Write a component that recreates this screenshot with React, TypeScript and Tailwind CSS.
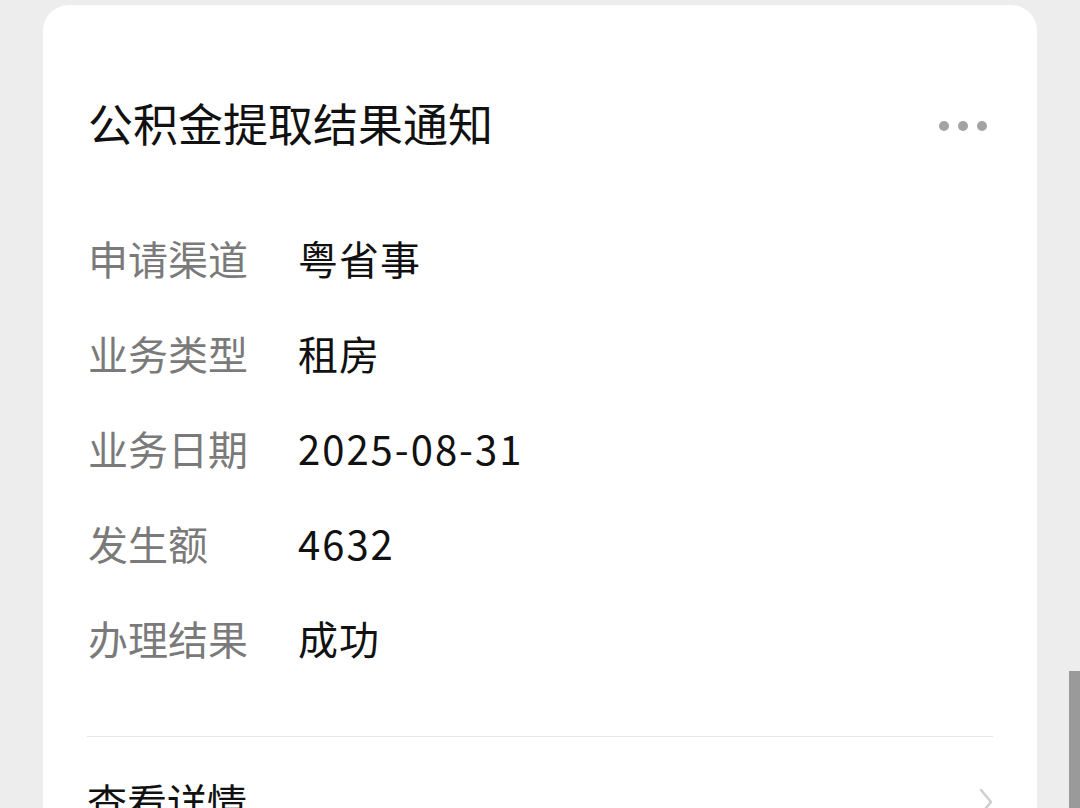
import React from 'react';

const rows = [
  { label: '申请渠道', value: '粤省事' },
  { label: '业务类型', value: '租房' },
  { label: '业务日期', value: '2025-08-31' },
  { label: '发生额', value: '4632' },
  { label: '办理结果', value: '成功' },
];

const font = { fontFamily: '"Noto Sans CJK SC", "Noto Sans", sans-serif' };

export default function App() {
  return (
    <div className="relative h-[808px] w-[1080px] overflow-hidden bg-[#ededed]" style={font}>
      <div className="ml-[43px] mt-[5px] w-[994px] rounded-[26px] bg-white px-[44px] pt-[90px]">
        {/* Header */}
        <div className="flex h-[56px] items-center justify-between pl-[1px]">
          <h1 className="text-[45px] leading-[56px] font-normal text-[#111]">公积金提取结果通知</h1>
          <div className="mr-[6px] mt-[6px] flex items-center gap-[9px]">
            <span className="h-[10px] w-[10px] rounded-full bg-[#a3a3a3]" />
            <span className="h-[10px] w-[10px] rounded-full bg-[#a3a3a3]" />
            <span className="h-[10px] w-[10px] rounded-full bg-[#a3a3a3]" />
          </div>
        </div>

        {/* Fields */}
        <div className="mt-[59px] flex flex-col pl-[1px]">
          {rows.map((r) => (
            <div key={r.label} className="flex h-[95px] items-center">
              <span className="w-[210px] text-[40px] leading-none text-[#7a7a7a]">{r.label}</span>
              <span
                className={
                  /\d/.test(r.value)
                    ? 'text-[40px] leading-none tracking-[2px] text-[#111]'
                    : 'text-[40px] leading-none tracking-[1px] text-[#111]'
                }
              >
                {r.value}
              </span>
            </div>
          ))}
        </div>

        <div className="mt-[51px] h-px bg-[#e6e6e6]" />

        {/* Footer link */}
        <div className="flex h-[130px] items-start justify-between pt-[44px]">
          <span className="text-[40px] leading-[40px] text-[#111]">查看详情</span>
          <svg className="-mr-[4px] mt-[3px] h-[40px] w-[20px]" viewBox="0 0 20 40" fill="none">
            <path d="M4 6 L14 18 L4 30" stroke="#cfcfcf" strokeWidth="2.5" strokeLinecap="round" strokeLinejoin="round" />
          </svg>
        </div>
      </div>

      {/* Scrollbar */}
      <div className="absolute left-[1069px] top-[671px] h-[200px] w-[11px] bg-[#9a9a9a]" />
    </div>
  );
}
